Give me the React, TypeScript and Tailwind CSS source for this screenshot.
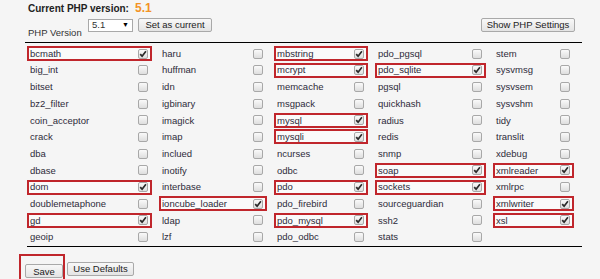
import React from 'react';

type Ext = { name: string; on?: boolean } | null;

const columns: Ext[][] = [
  [
    { name: 'bcmath', on: true },
    { name: 'big_int' },
    { name: 'bitset' },
    { name: 'bz2_filter' },
    { name: 'coin_acceptor' },
    { name: 'crack' },
    { name: 'dba' },
    { name: 'dbase' },
    { name: 'dom', on: true },
    { name: 'doublemetaphone' },
    { name: 'gd', on: true },
    { name: 'geoip' },
  ],
  [
    { name: 'haru' },
    { name: 'huffman' },
    { name: 'idn' },
    { name: 'igbinary' },
    { name: 'imagick' },
    { name: 'imap' },
    { name: 'inclued' },
    { name: 'inotify' },
    { name: 'interbase' },
    { name: 'ioncube_loader', on: true },
    { name: 'ldap' },
    { name: 'lzf' },
  ],
  [
    { name: 'mbstring', on: true },
    { name: 'mcrypt', on: true },
    { name: 'memcache' },
    { name: 'msgpack' },
    { name: 'mysql', on: true },
    { name: 'mysqli', on: true },
    { name: 'ncurses' },
    { name: 'odbc' },
    { name: 'pdo', on: true },
    { name: 'pdo_firebird' },
    { name: 'pdo_mysql', on: true },
    { name: 'pdo_odbc' },
  ],
  [
    { name: 'pdo_pgsql' },
    { name: 'pdo_sqlite', on: true },
    { name: 'pgsql' },
    { name: 'quickhash' },
    { name: 'radius' },
    { name: 'redis' },
    { name: 'snmp' },
    { name: 'soap', on: true },
    { name: 'sockets', on: true },
    { name: 'sourceguardian' },
    { name: 'ssh2' },
    { name: 'stats' },
  ],
  [
    { name: 'stem' },
    { name: 'sysvmsg' },
    { name: 'sysvsem' },
    { name: 'sysvshm' },
    { name: 'tidy' },
    { name: 'translit' },
    { name: 'xdebug' },
    { name: 'xmlreader', on: true },
    { name: 'xmlrpc' },
    { name: 'xmlwriter', on: true },
    { name: 'xsl', on: true },
    null,
  ],
];

function Checkbox({ checked }: { checked?: boolean }) {
  return (
    <span className="w-[10px] h-[10px] rounded-[2px] border border-[#a8a8a8] bg-gradient-to-b from-[#fafafa] to-[#dedede] flex items-center justify-center shrink-0">
      {checked && (
        <svg width="8" height="8" viewBox="0 0 8 8">
          <path d="M1.2 4.2 L3.1 6.2 L6.9 1.3" fill="none" stroke="#2a2a2a" strokeWidth="1.7" />
        </svg>
      )}
    </span>
  );
}

const btn =
  'h-[14px] border border-[#a9a9a9] rounded-[2px] bg-gradient-to-b from-[#f8f8f8] to-[#e4e4e4] text-[9.5px] leading-none text-[#222]';

export default function App() {
  const rows = Array.from({ length: 12 }, (_, r) => columns.map(c => c[r]));

  return (
    <div className="w-[600px] h-[279px] bg-[#f5f5f5] text-[#333] font-['Liberation_Sans',Arial,sans-serif] overflow-hidden">
      {/* Current version */}
      <div className="pl-[28px] pt-[1px] h-[15px] flex items-center gap-[6px]">
        <span className="text-[10px] font-bold text-[#222]">Current PHP version:</span>
        <span className="text-[12px] font-bold text-[#f39325]">5.1</span>
      </div>

      {/* Controls */}
      <div className="flex justify-between items-start pl-[28px] pr-[25px] mt-[3px] h-[24px]">
        <div className="flex items-start">
          <span className="text-[9.5px] mt-[8px] w-[60px]">PHP Version</span>
          <div className="mt-[1px] w-[45px] h-[13px] bg-white border border-[#a9a9a9] flex items-center justify-between px-[3px] text-[9.5px]">
            <span>5.1</span>
            <span className="text-[7px] text-black">▼</span>
          </div>
          <button className={`${btn} ml-[5px] w-[74px]`}>Set as current</button>
        </div>
        <button className={`${btn} w-[94px]`}>Show PHP Settings</button>
      </div>

      <div className="ml-[25px] w-[557px] border-t border-black" />

      {/* Extensions grid */}
      <div className="ml-[27px] mt-[3px] grid grid-cols-[125px_108px_94px_111px_81px] gap-x-[7px] gap-y-[1.7px]">
        {rows.map((row, r) =>
          row.map((ext, c) =>
            ext ? (
              <div
                key={`${r}-${c}`}
                className={`h-[15px] flex items-center justify-between pl-[1px] pr-[2px] border-2 ${ext.on ? 'border-[#c0262c] bg-[#fafafa]' : 'border-transparent'}`}
              >
                <span className="text-[9.5px] leading-none text-[#2e2b3a]">{ext.name}</span>
                <Checkbox checked={ext.on} />
              </div>
            ) : (
              <div key={`${r}-${c}`} className="h-[15px]" />
            )
          )
        )}
      </div>

      <div className="ml-[27px] mt-[1px] w-[555px] border-t border-black" />

      {/* Footer buttons */}
      <div className="flex items-center ml-[19px] mt-[7px]">
        <div className="border-2 border-[#c0262c] pl-[4px] pt-[2px] pb-[1px]">
          <button className={`${btn} w-[38px]`}>Save</button>
        </div>
        <button className={`${btn} ml-[2px] w-[67px]`}>Use Defaults</button>
      </div>
    </div>
  );
}
